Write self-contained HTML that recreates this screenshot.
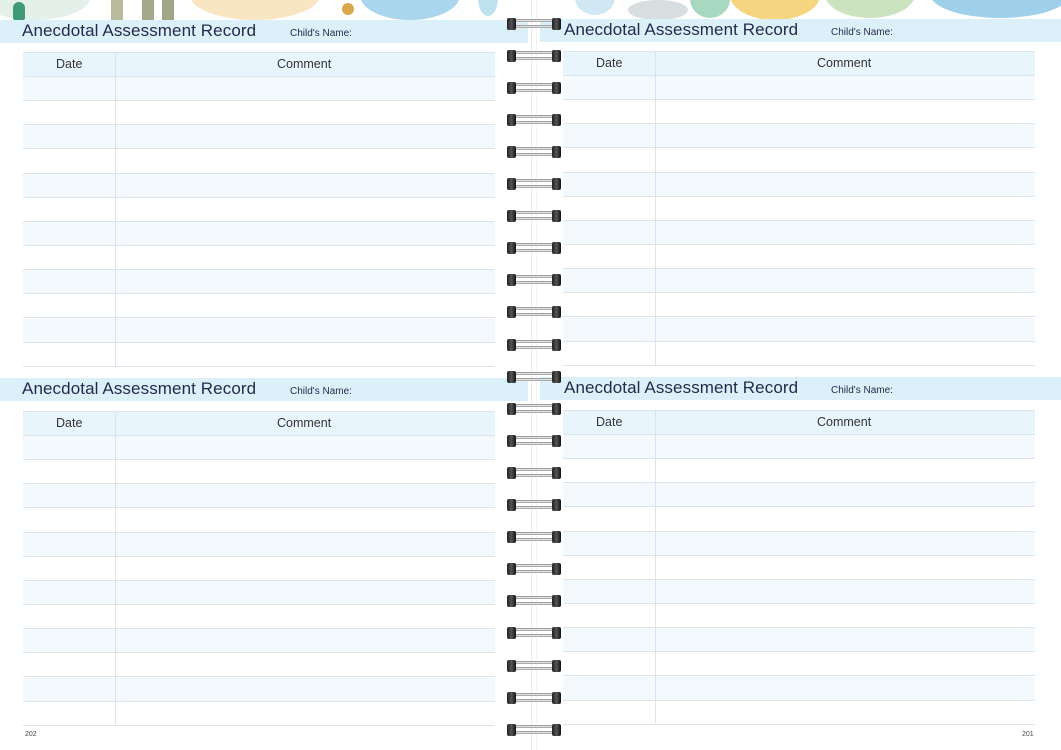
<!DOCTYPE html>
<html><head><meta charset="utf-8"><style>
*{margin:0;padding:0;box-sizing:border-box}
body{width:1061px;height:750px;position:relative;overflow:hidden;background:#fff;font-family:"Liberation Sans",sans-serif;color:#2b2d4a}
.abs{position:absolute}
.blob{position:absolute;border-radius:50%}
.band{position:absolute;height:23px;background:#dcf0fa}
.title{position:absolute;font-size:17px;letter-spacing:0.1px;color:#262a4a}
.cn{position:absolute;font-size:10px;color:#262a4a}
.tbl{position:absolute;width:472px}
.row{position:absolute;left:0;width:100%;border-bottom:1px solid #dde3ea}
.hd{font-size:12.5px;color:#333;position:absolute;top:5px}
.vl{position:absolute;width:1px;background:#dde3ea}
.ring{position:absolute;left:507px;width:54px;height:12px}
.ring .e{position:absolute;top:0;width:9px;height:12px;background:linear-gradient(90deg,#222,#555,#111);border-radius:2px}
.ring .b{position:absolute;left:8px;width:38px;height:3px;background:linear-gradient(#777,#f4f4f4,#888)}
.pn{position:absolute;top:731px;font-size:7px;color:#444}
</style></head><body>
<div class="blob" style="left:-20px;top:-25px;width:110px;height:45px;background:#e4f0ea"></div>
<div class="blob" style="left:13px;top:2px;width:12px;height:18px;background:#3e9a78;border-radius:6px 6px 2px 2px"></div>
<div class="abs" style="left:111px;top:0;width:12px;height:20px;background:#b9bb9c"></div>
<div class="abs" style="left:142px;top:0;width:12px;height:20px;background:#a4a98a"></div>
<div class="abs" style="left:162px;top:0;width:12px;height:20px;background:#a0a686"></div>
<div class="blob" style="left:190px;top:-30px;width:130px;height:50px;background:#f8e6c2"></div>
<div class="blob" style="left:342px;top:3px;width:12px;height:12px;background:#d9a84a"></div>
<div class="blob" style="left:360px;top:-30px;width:100px;height:50px;background:#a9d6ec"></div>
<div class="blob" style="left:478px;top:-20px;width:20px;height:36px;background:#bfe2f1"></div>
<div class="blob" style="left:575px;top:-20px;width:40px;height:35px;background:#cfe8f3"></div>
<div class="blob" style="left:628px;top:0;width:60px;height:20px;background:#d8dde0"></div>
<div class="blob" style="left:690px;top:-20px;width:40px;height:38px;background:#a8d8bf"></div>
<div class="blob" style="left:730px;top:-30px;width:90px;height:50px;background:#f6d580"></div>
<div class="blob" style="left:825px;top:-30px;width:90px;height:48px;background:#cbe4bf"></div>
<div class="blob" style="left:930px;top:-30px;width:140px;height:48px;background:#9fd2ea"></div>
<div class="vl" style="left:531px;top:0;height:750px;background:#ececec"></div>
<div class="vl" style="left:536px;top:0;height:750px;background:#f2f2f2"></div>

<div class="band" style="left:0;top:20px;width:528px"></div>
<div class="band" style="left:540px;top:19px;width:521px"></div>
<div class="band" style="left:0;top:378px;width:528px"></div>
<div class="band" style="left:540px;top:377px;width:521px"></div>
<div class="title" style="left:22px;top:21px">Anecdotal Assessment Record</div>
<div class="cn" style="left:290px;top:28px">Child's Name:</div>
<div class="title" style="left:564px;top:20px">Anecdotal Assessment Record</div>
<div class="cn" style="left:831px;top:27px">Child's Name:</div>
<div class="title" style="left:22px;top:379px">Anecdotal Assessment Record</div>
<div class="cn" style="left:290px;top:386px">Child's Name:</div>
<div class="title" style="left:564px;top:378px">Anecdotal Assessment Record</div>
<div class="cn" style="left:831px;top:385px">Child's Name:</div>

<div class="tbl" id="t1" style="left:23px;top:52px"><span class="hd" style="left:33px">Date</span><span class="hd" style="left:254px">Comment</span></div>
<div class="tbl" id="t2" style="left:563px;top:51px"><span class="hd" style="left:33px">Date</span><span class="hd" style="left:254px">Comment</span></div>
<div class="tbl" id="t3" style="left:23px;top:411px"><span class="hd" style="left:33px">Date</span><span class="hd" style="left:254px">Comment</span></div>
<div class="tbl" id="t4" style="left:563px;top:410px"><span class="hd" style="left:33px">Date</span><span class="hd" style="left:254px">Comment</span></div>

<div class="pn" style="left:25px">202</div>
<div class="pn" style="left:1022px">201</div>
<div id="rings"></div>
<script>
['t1','t2','t3','t4'].forEach(function(id){
  var t=document.getElementById(id),h='';
  h+='<div class="row" style="top:0;height:25px;background:#e9f5fc;border-top:1px solid #dde3ea;z-index:-1"></div>';
  for(var i=0;i<12;i++){
    var top=25+i*24.15;
    h+='<div class="row" style="top:'+top+'px;height:24.15px;background:'+(i%2==0?'#f3f9fd':'#fff')+';z-index:-1"></div>';
  }
  h+='<div class="vl" style="left:92px;top:0;height:315px"></div>';
  t.insertAdjacentHTML('afterbegin',h);
});
var r='';
for(var k=0;k<23;k++){
  var y=17.5+k*32.1;
  r+='<div class="ring" style="top:'+y+'px"><div class="b" style="top:1px"></div><div class="b" style="top:7px"></div><div class="e" style="left:0"></div><div class="e" style="left:45px"></div></div>';
}
document.getElementById('rings').innerHTML=r;
</script>
</body></html>
